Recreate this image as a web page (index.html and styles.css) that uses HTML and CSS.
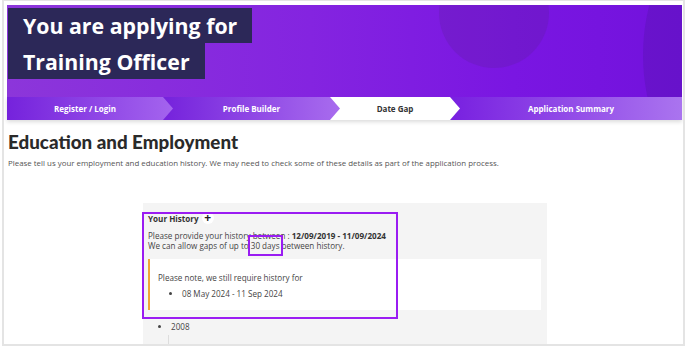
FILE: index.html
```html
<!DOCTYPE html>
<html lang="en">
<head>
    <meta charset="UTF-8">
    <meta name="viewport" content="width=device-width, initial-scale=1.0">
    <title>Date Gap - Training Officer</title>
    <link rel="stylesheet" href="styles.css">
</head>
<body>

    <div class="frame">
        <div class="hero">
            <h1 class="hero-title">
                <span>You are applying for</span>
                <span>Training Officer</span>
            </h1>
        </div>

        <div class="steps">
            <div class="step step-one">Register / Login</div>
            <div class="step step-two">Profile Builder</div>
            <div class="step step-current">Date Gap</div>
            <div class="step step-last">Application Summary</div>
        </div>

        <div class="content">
            <h2 class="page-title">Education and Employment</h2>
            <p class="intro">Please tell us your employment and education history. We may need to check some of these details as part of the application process.</p>

            <div class="history">
                <div class="history-head">
                    <span>Your History</span>
                    <span class="plus">+</span>
                </div>
                <p class="history-line">Please provide your history between : <b>12/09/2019 - 11/09/2024</b></p>
                <p class="history-line">We can allow gaps of up to <span class="mark-days">30 days</span> between history.</p>

                <div class="notice">
                    <p>Please note, we still require history for</p>
                    <ul>
                        <li>08 May 2024 - 11 Sep 2024</li>
                    </ul>
                </div>

                <ul class="years">
                    <li>2008</li>
                </ul>
                <div class="timeline"></div>

                <!-- annotation box drawn over the screenshot -->
                <div class="mark"></div>
            </div>
        </div>
    </div>

</body>
</html>
```

FILE: styles.css
```css
body {
    margin: 0;
    background-color: #fff;
    font-family: "Open Sans", Lato, Arial, sans-serif;
    color: #333;
}

.frame {
    box-sizing: border-box;
    width: 683px;
    height: 346px;
    margin-left: 2px;
    padding: 4px 1px 0 3px;
    border: 2px solid #e4e4e4;
    border-top: 1px solid #e4e4e4;
    overflow: hidden;
}

.hero {
    position: relative;
    height: 92px;
    overflow: hidden;
    background: linear-gradient(90deg, #8c36da 0%, #8424e0 45%, #7a16e2 75%, #7212dc 100%);
}

/* darker circles in the banner */
.hero::before {
    content: "";
    position: absolute;
    left: 432px;
    top: -47px;
    width: 110px;
    height: 110px;
    border-radius: 50%;
    background-color: rgba(90, 30, 150, 0.25);
}

.hero::after {
    content: "";
    position: absolute;
    left: 636px;
    top: -150px;
    width: 400px;
    height: 400px;
    border-radius: 50%;
    background-color: rgba(70, 20, 150, 0.25);
}

.hero-title {
    position: relative;
    z-index: 1;
    display: flex;
    flex-direction: column;
    align-items: flex-start;
    margin: 3px 0 0 1px;
    font-family: "Open Sans", Arial, sans-serif;
    font-size: 21.3px;
    font-weight: 700;
    line-height: 35px;
    color: #fff;
}

.hero-title span {
    height: 35px;
    padding: 0 15px 0 15px;
    background-color: #2c2858;
}

.hero-title span + span {
    height: 36px;
    line-height: 37px;
}

.steps {
    display: flex;
    height: 23px;
    box-shadow: 0 2px 4px rgba(0, 0, 0, 0.14);
}

.step {
    position: relative;
    display: flex;
    align-items: center;
    justify-content: center;
    box-sizing: border-box;
    height: 23px;
    font-size: 8px;
    font-weight: 700;
    color: #fff;
    clip-path: polygon(0 0, calc(100% - 10px) 0, 100% 50%, calc(100% - 10px) 100%, 0 100%);
}

.step-one {
    z-index: 4;
    width: 166px;
    padding-right: 10px;
    background: linear-gradient(90deg, #7522dc, #a464ee);
}

.step-two {
    z-index: 3;
    width: 177px;
    margin-left: -10px;
    padding-left: 10px;
    padding-right: 10px;
    background: linear-gradient(90deg, #7522dc, #a86cee);
}

.step-current {
    z-index: 2;
    width: 132px;
    margin-left: -12px;
    padding-left: 12px;
    padding-right: 10px;
    background-color: #fff;
    color: #333;
}

.step-last {
    z-index: 1;
    flex: 1;
    margin-left: -10px;
    padding-left: 10px;
    clip-path: none;
    background: linear-gradient(90deg, #7820e0, #aa74ef);
}

.content {
    padding: 0 0 0 1px;
}

.page-title {
    margin: 11px 0 0 0;
    font-family: Lato, "Open Sans", Arial, sans-serif;
    font-size: 18.8px;
    font-weight: 900;
    line-height: 22px;
    color: #2a2a2a;
}

.intro {
    margin: 5px 0 0 0;
    font-size: 7.9px;
    line-height: 10px;
    color: #555;
}

.history {
    position: relative;
    width: 404px;
    height: 200px;
    margin: 35px 0 0 135px;
    padding: 10px 6px 0 5px;
    box-sizing: border-box;
    background-color: #f4f4f4;
    font-size: 8.1px;
    color: #444;
}

.history-head {
    display: flex;
    align-items: center;
    gap: 3px;
    font-weight: 700;
    color: #333;
}

.plus {
    display: flex;
    align-items: center;
    justify-content: center;
    width: 12px;
    height: 12px;
    margin-top: -2px;
    border-radius: 50%;
    background-color: #fff;
    font-size: 12px;
    line-height: 12px;
    font-weight: 700;
    color: #222;
}

.history-line {
    margin: 0;
    line-height: 10px;
}

.history-head + .history-line {
    margin-top: 7px;
}

.history-line b {
    color: #333;
}

.mark-days {
    padding: 2px 0;
    outline: 2px solid #9a1cf2;
    outline-offset: 1px;
}

.notice {
    margin: 8px 0 0 0;
    padding: 14px 10px 11px 8px;
    border-left: 2px solid #f0a536;
    background-color: #fff;
}

.notice p {
    margin: 0;
    line-height: 10px;
}

.notice ul {
    margin: 6px 0 0 0;
    padding-left: 24px;
    line-height: 10px;
}

.years {
    margin: 12px 0 0 0;
    padding-left: 23px;
    line-height: 10px;
}

.timeline {
    width: 1px;
    height: 20px;
    margin: 3px 0 0 20px;
    background-color: #ddd;
}

.mark {
    position: absolute;
    left: -1px;
    top: 9px;
    width: 256px;
    height: 107px;
    box-sizing: border-box;
    border: 2px solid #9a1cf2;
}
```
